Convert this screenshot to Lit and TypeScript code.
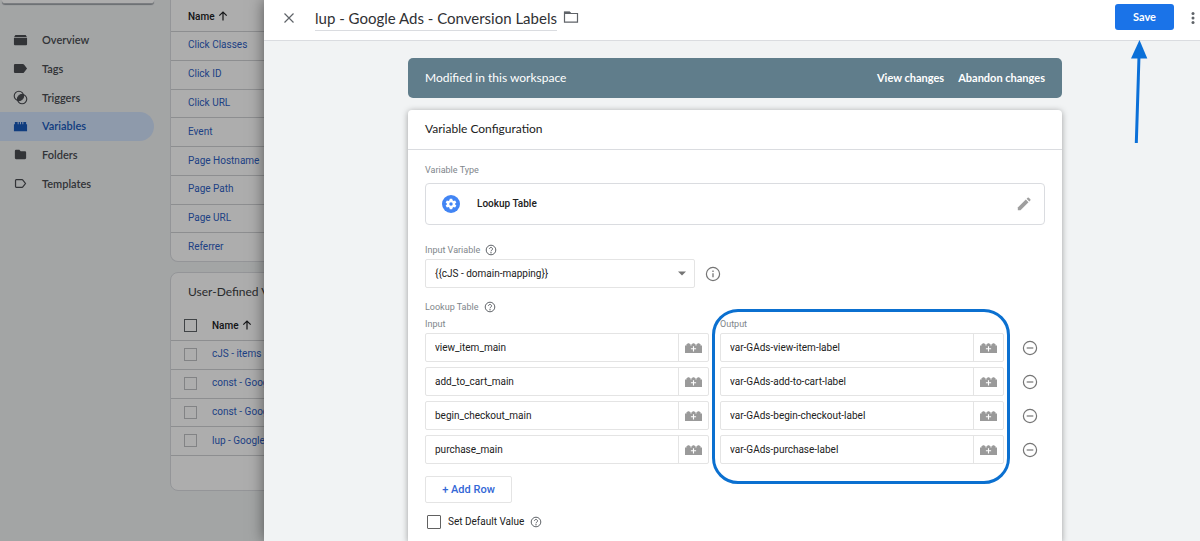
import { LitElement, html, css, svg, nothing } from "lit";
import { customElement, property, state } from "lit/decorators.js";
import { classMap } from "lit/directives/class-map.js";

const glyphs = {
  overview: svg`<path d="M2.500 2h11l1.500 2.500H1z"/><path d="M1 5.200h14V12a1 1 0 0 1-1 1H2a1 1 0 0 1-1-1z"/>`,
  tags: svg`<path d="M1 4.300A1.200 1.200 0 0 1 2.200 3.100H10.500a1.500 1.500 0 0 1 1.200.600L15 8l-3.300 4.300a1.500 1.500 0 0 1-1.200.600H2.200A1.200 1.200 0 0 1 1 11.700z"/>`,
  triggers: svg`<g fill="none" stroke="currentColor" stroke-width="1.200"><circle cx="6.300" cy="6.300" r="5"/><circle cx="9.700" cy="9.700" r="5"/></g><path d="M5 11.100A5 5 0 0 1 11.100 5a5 5 0 0 1-6.100 6.100z"/>`,
  variables: svg`<path d="M1 13V5.500h1V3.200h3v2.300h1V3.200h1.500v2.300h1V3.200H10v2.300h1V3.200h3v2.300h1V13z"/>`,
  folders: svg`<path d="M2 4.200A1.200 1.200 0 0 1 3.200 3h3.600l1.400 1.600h4.600A1.200 1.200 0 0 1 14 5.800v6a1.200 1.200 0 0 1-1.200 1.200H3.200A1.200 1.200 0 0 1 2 11.800z"/>`,
  templates: svg`<path d="M2.700 4.700v6.600a.8.800 0 0 0 .8.800h6.200a1 1 0 0 0 .8-.4L13.300 8l-2.800-3.700a1 1 0 0 0-.8-.4H3.500a.8.800 0 0 0-.8.800z" fill="none" stroke="currentColor" stroke-width="1.300"/>`,
};

const arrowUp = html`<svg class="sort" viewBox="0 0 10 10" width="10" height="10" aria-hidden="true">
  <path d="M5 9.500V1.200M1.300 4.700 5 1l3.700 3.700" fill="none" stroke="currentColor" stroke-width="1.200"/>
</svg>`;

const helpIcon = html`<svg viewBox="0 0 12 12" width="12" height="12" aria-hidden="true">
  <g fill="none" stroke="currentColor"><circle cx="6" cy="6" r="4.800"/><path d="M4.500 4.900a1.500 1.500 0 1 1 2.400 1.200c-.6.400-.9.600-.9 1.200"/></g>
  <circle cx="6" cy="8.700" r=".7" fill="currentColor"/>
</svg>`;

const brickIcon = html`<svg viewBox="0 0 17 10" width="17" height="10" aria-hidden="true">
  <path d="M0 10V2.500h1.500V1h1V.3h2V1h1v1.500h1V1h1V.3h2V1h1v1.500h1V1h1V.3h2V1h1v1.500H17V10z" fill="#9a9a9a"/>
  <path d="M8.500 3.200v5.200M5.900 5.800h5.200" stroke="#fff" stroke-width="1.100"/>
</svg>`;

@customElement("side-nav")
class SideNav extends LitElement {
  static styles = css`
    :host { display: block; font: 500 11px/16px Lato, "Open Sans", sans-serif; color: #4a4d52; }
    .search { height: 3px; margin: 0 0 22px 2px; border-bottom: 1px solid #b5b9be; border-radius: 0 0 3px 3px; background: #fff; box-shadow: 0 1px 1px #9aa0a6; }
    .items { display: grid; grid-auto-rows: 1fr; height: 172px; }
    .item { display: flex; align-items: center; gap: 14px; padding-left: 13px; border-radius: 0 15px 15px 0; color: inherit; text-decoration: none; }
    .item svg { fill: currentColor; width: 15px; height: 15px; }
    .active { background: #d2e3fc; color: #185abc; }
    .item span { font-weight: 600; }
  `;
  @property() active = "Variables";
  render() {
    const names = ["Overview", "Tags", "Triggers", "Variables", "Folders", "Templates"];
    return html`<div class="search"></div>
      <nav class="items">
        ${names.map((n) => html`<a href="#${n}" class=${classMap({ item: true, active: n === this.active })}>
          <svg viewBox="0 0 16 16" aria-hidden="true">${glyphs[n.toLowerCase() as keyof typeof glyphs]}</svg><span>${n}</span>
        </a>`)}
      </nav>`;
  }
}

@customElement("variable-list")
class VariableList extends LitElement {
  static styles = css`
    :host { display: block; background: #fff; border: 1px solid #dadce0; border-radius: 8px; font: 10px/16px Roboto, sans-serif; }
    .title { margin: 0; padding: 11px 17px; font: 400 12px/16px Lato, sans-serif; color: #3c4043; white-space: nowrap; }
    table { width: 100%; height: 259px; border-collapse: collapse; }
    table.selectable { height: 144px; }
    th { height: 29px; padding: 0; text-align: left; font-weight: 500; color: #202124; white-space: nowrap; }
    td { padding: 0 0 1px; border-top: 1px solid #d0d2d5; white-space: nowrap; }
    th.pad, td.pad { padding-left: 17px; }
    th.tick, td.tick { width: 28px; padding-left: 13px; }
    .sort { margin-left: 1px; vertical-align: -1px; }
    a { color: #2f5fc4; text-decoration: none; font-size: 10px; }
    input { appearance: none; display: block; box-sizing: border-box; width: 13px; height: 13px; margin: 0; border: 1px solid #c0c2c4; }
    th input { border-color: #5f6368; }
    .foot { height: 34px; border-top: 1px solid #d0d2d5; }
  `;
  @property() heading = "";
  @property({ type: Boolean }) selectable = false;
  @property({ attribute: false }) names: string[] = [];
  render() {
    const tick = (label: string) => this.selectable ? html`<input type="checkbox" aria-label=${label}>` : nothing;
    return html`
      ${this.heading ? html`<h2 class="title">${this.heading}</h2>` : nothing}
      <table class=${classMap({ selectable: this.selectable })}>
        <thead><tr>
          ${this.selectable ? html`<th class="tick">${tick("Select all")}</th>` : nothing}
          <th class=${this.selectable ? "" : "pad"}>Name ${arrowUp}</th>
        </tr></thead>
        <tbody>
          ${this.names.map((n) => html`<tr>
            ${this.selectable ? html`<td class="tick">${tick(n)}</td>` : nothing}
            <td class=${this.selectable ? "" : "pad"}><a href="#">${n}</a></td>
          </tr>`)}
        </tbody>
      </table>
      ${this.selectable ? html`<div class="foot"></div>` : nothing}`;
  }
}

@customElement("brick-field")
class BrickField extends LitElement {
  static styles = css`
    :host { display: flex; box-sizing: border-box; height: 29px; border: 1px solid #e4e4e4; border-radius: 2px; background: #fff; }
    input { flex: 1; min-width: 0; border: 0; padding: 0 9px; background: none; font: 10px/16px Roboto, sans-serif; color: #212121; outline: none; }
    button { display: grid; place-items: center; width: 30px; padding: 0; border: 0; border-left: 1px solid #e4e4e4; background: none; }
  `;
  @property() value = "";
  @property() label = "";
  render() {
    return html`<input type="text" aria-label=${this.label} .value=${this.value}>
      <button aria-label="Insert variable">${brickIcon}</button>`;
  }
}

@customElement("variable-editor")
class VariableEditor extends LitElement {
  static styles = css`
    :host { display: flex; flex-direction: column; background: #f1f3f4; font: 10px/16px Roboto, sans-serif; color: #212121; }
    button { font: inherit; padding: 0; border: 0; background: none; color: inherit; }
    svg { display: block; }
    .bar { display: flex; align-items: center; height: 40px; padding-left: 18px; background: #fff; border-bottom: 1px solid #dadce0; flex: none; }
    .bar .icon { display: grid; place-items: center; width: 14px; height: 35px; color: #5f6368; align-self: start; }
    .name { width: 242px; height: 24px; box-sizing: border-box; margin: 0 6px 2px 19px; padding: 0 0 2px; border: 0; border-bottom: 1px solid #dadce0; font: 15px/20px Lato, sans-serif; color: #303134; outline: none; background: none; }
    .spacer { flex: 1; }
    .save-wrap { position: relative; align-self: start; margin: 4px 12px 0 0; }
    .save { width: 59px; height: 26px; border-radius: 3px; background: #1a73e8; color: #fff; font: 700 11px/16px Lato, sans-serif; }
    .arrow { position: absolute; left: 15px; top: 36px; }
    .body { flex: 1; display: flex; flex-direction: column; gap: 12px; padding: 17px 138px 0 144px; }
    .banner { display: flex; align-items: center; gap: 14px; height: 40px; padding: 0 17px; border-radius: 5px; background: #607d8b; color: #fff; font: 12px/16px Lato, sans-serif; }
    .banner button { font: 700 11px/16px Lato, sans-serif; }
    .card { flex: 1; background: #fff; border-radius: 4px 4px 0 0; box-shadow: 0 1px 6px rgba(0, 0, 0, .35); }
    .card h2 { margin: 0; padding: 11px 17px 12px; border-bottom: 1px solid #dadce0; font: 400 12px/16px Lato, sans-serif; }
    .form { padding: 12px 17px; }
    .label { display: flex; align-items: center; gap: 5px; font-size: 9px; color: #80868b; }
    .label svg, .default svg { color: #5f6368; }
    .type { display: flex; align-items: center; gap: 17px; width: 100%; height: 42px; margin: 5px 0 17px; padding: 0 13px 0 16px; border: 1px solid #dadce0; border-radius: 4px; font-weight: 500; text-align: left; }
    .type span { flex: 1; }
    .source { display: flex; align-items: center; gap: 10px; margin: 1px 0 11px; }
    .select { position: relative; width: 270px; }
    .select svg { position: absolute; right: 9px; top: 12px; pointer-events: none; }
    select { appearance: none; width: 100%; height: 29px; padding: 0 9px; border: 1px solid #e4e4e4; border-radius: 2px; background: #fff; font: 10px/16px Roboto, sans-serif; color: #212121; }
    .source button, .remove { color: #757575; }
    .rows { position: relative; display: grid; grid-template-columns: 1fr 1fr 30px; grid-template-rows: 12px repeat(4, 29px); gap: 5px 11px; margin-top: 1px; }
    .rows .label { margin-bottom: -4px; }
    .remove { display: grid; place-items: center; }
    .highlight { position: absolute; grid-area: 1 / 2 / -1 / 3; inset: -7px -6px -20px -8px; border: 3px solid #0b70d0; border-radius: 26px; pointer-events: none; }
    .add { display: block; width: 87px; height: 27px; margin: 12px 0 11px; border: 1px solid #e4e4e4; border-radius: 2px; color: #3367d6; font-weight: 500; font-size: 11px; }
    .default { display: flex; align-items: center; gap: 6px; padding-left: 2px; }
    .default label { display: flex; align-items: center; gap: 7px; }
    .default input { appearance: none; box-sizing: border-box; width: 14px; height: 14px; margin: 0; border: 1px solid #616161; border-radius: 1px; }
  `;
  @state() rows = [
    ["view_item_main", "var-GAds-view-item-label"],
    ["add_to_cart_main", "var-GAds-add-to-cart-label"],
    ["begin_checkout_main", "var-GAds-begin-checkout-label"],
    ["purchase_main", "var-GAds-purchase-label"],
  ];
  private removeRow(i: number) { this.rows = this.rows.filter((_, k) => k !== i); }
  render() {
    return html`
      <header class="bar">
        <button class="icon" aria-label="Close"><svg viewBox="0 0 12 12" width="12" height="12"><path d="m1.500 1.500 9 9m0-9-9 9" stroke="currentColor" stroke-width="1.200"/></svg></button>
        <input class="name" aria-label="Variable name" .value=${"lup - Google Ads - Conversion Labels"}>
        <button class="icon" aria-label="Move to folder"><svg viewBox="0 0 16 13" width="16" height="13"><path d="M1.500 2.500v8.700h13V2.500H7.800L6.500 1.200h-5z" fill="none" stroke="currentColor" stroke-width="1.200"/><path d="M1 .8h5.700L8.300 3H1z" fill="currentColor"/></svg></button>
        <span class="spacer"></span>
        <div class="save-wrap">
          <button class="save">Save</button>
          <svg class="arrow" viewBox="0 0 18 104" width="18" height="104" aria-hidden="true"><path d="M9.500 0 17.300 18.500H1z" fill="#0b70d8"/><path d="M9 16 6.300 103" stroke="#0b70d8" stroke-width="3"/></svg>
        </div>
        <button class="icon" aria-label="More"><svg viewBox="0 0 4 14" width="4" height="14" fill="currentColor"><circle cx="2" cy="2.500" r="1.500"/><circle cx="2" cy="7" r="1.500"/><circle cx="2" cy="11.500" r="1.500"/></svg></button>
      </header>
      <div class="body">
        <section class="banner"><span>Modified in this workspace</span><span class="spacer"></span><button>View changes</button><button>Abandon changes</button></section>
        <section class="card">
          <h2>Variable Configuration</h2>
          <div class="form">
            <div class="label">Variable Type</div>
            <button class="type">
              <svg viewBox="0 0 24 24" width="18" height="18"><circle cx="12" cy="12" r="12" fill="#4285f4"/><path d="M10.400 5h3.200l.5 2.100 1.300.8 2.100-.7 1.600 2.800-1.600 1.400v1.200l1.600 1.400-1.600 2.800-2.100-.7-1.300.8-.5 2.100h-3.200l-.5-2.100-1.300-.8-2.100.7L4.900 14l1.600-1.400v-1.200L4.900 10l1.600-2.800 2.100.7 1.300-.8z" fill="#fff"/><circle cx="12" cy="12" r="2.300" fill="#4285f4"/></svg>
              <span>Lookup Table</span>
              <svg viewBox="0 0 14 14" width="14" height="14" fill="#9e9e9e"><path d="M.8 10.500 8.800 2.500l2.700 2.700-8 8H.8z"/><path d="m9.600 1.700 1-1a.9.900 0 0 1 1.200 0l1.500 1.500a.9.900 0 0 1 0 1.200l-1 1z"/></svg>
            </button>
            <label class="label" for="source">Input Variable ${helpIcon}</label>
            <div class="source">
              <div class="select">
                <select id="source"><option>{{cJS - domain-mapping}}</option></select>
                <svg viewBox="0 0 8 5" width="8" height="5"><path d="M0 .5h8L4 4.500z" fill="#757575"/></svg>
              </div>
              <button aria-label="Variable details"><svg viewBox="0 0 16 16" width="16" height="16"><circle cx="8" cy="8" r="6.600" fill="none" stroke="currentColor" stroke-width="1.200"/><path d="M8 7.200v4.100M8 4.500v1.400" stroke="currentColor" stroke-width="1.300"/></svg></button>
            </div>
            <div class="label">Lookup Table ${helpIcon}</div>
            <div class="rows">
              <div class="label">Input</div><div class="label">Output</div><span></span>
              ${this.rows.map(([input, output], i) => html`
                <brick-field label="Input" .value=${input}></brick-field>
                <brick-field label="Output" .value=${output}></brick-field>
                <button class="remove" aria-label="Remove row" @click=${() => this.removeRow(i)}><svg viewBox="0 0 16 16" width="16" height="16"><circle cx="8" cy="8" r="6.600" fill="none" stroke="currentColor" stroke-width="1.200"/><path d="M4.700 8h6.600" stroke="currentColor" stroke-width="1.200"/></svg></button>`)}
              <div class="highlight"></div>
            </div>
            <button class="add">+ Add Row</button>
            <div class="default"><label><input type="checkbox">Set Default Value</label>${helpIcon}</div>
          </div>
        </section>
      </div>`;
  }
}

@customElement("app-root")
class AppRoot extends LitElement {
  static styles = css`
    :host { display: block; position: relative; min-height: 100vh; overflow: hidden; background: #f1f3f4; }
    .page { display: grid; grid-template-columns: 154px 1fr; gap: 16px; }
    .lists { display: grid; gap: 10px; min-width: 0; }
    .first { border-top: 0; border-radius: 0 0 8px 8px; padding-top: 2px; }
    .scrim { position: absolute; inset: 0; background: rgba(0, 0, 0, .32); }
    .drawer { position: absolute; inset: 0 0 0 22%; box-shadow: 0 0 14px rgba(0, 0, 0, .5); }
  `;
  render() {
    return html`
      <div class="page">
        <side-nav></side-nav>
        <div class="lists">
          <variable-list class="first" .names=${["Click Classes", "Click ID", "Click URL", "Event", "Page Hostname", "Page Path", "Page URL", "Referrer"]}></variable-list>
          <variable-list selectable heading="User-Defined Variables" .names=${["cJS - items", "const - Google", "const - Google", "lup - Google"]}></variable-list>
        </div>
      </div>
      <div class="scrim"></div>
      <variable-editor class="drawer"></variable-editor>`;
  }
}
